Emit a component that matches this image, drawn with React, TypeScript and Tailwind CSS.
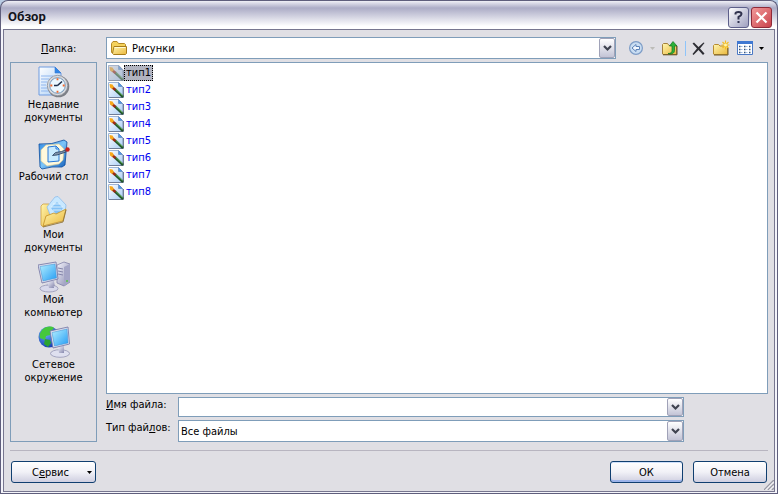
import type { ReactNode } from "react";
import { clsx } from "clsx";

const files = ["тип1", "тип2", "тип3", "тип4", "тип5", "тип6", "тип7", "тип8"];

function Gradients() {
  return (
    <svg width="0" height="0" className="absolute" aria-hidden="true">
      <defs>
        <linearGradient id="paper" x1="0" y1="0" x2="1" y2="1">
          <stop offset="0" stopColor="#ffffff" />
          <stop offset="1" stopColor="#a9cdf5" />
        </linearGradient>
        <linearGradient id="screen" x1="0" y1="0" x2="1" y2="1">
          <stop offset="0" stopColor="#b4f0ff" />
          <stop offset="1" stopColor="#249cf4" />
        </linearGradient>
        <linearGradient id="gold" x1="0" y1="0" x2="1" y2="1">
          <stop offset="0" stopColor="#fff6b0" />
          <stop offset="1" stopColor="#eab73c" />
        </linearGradient>
        <linearGradient id="metal" x1="0" y1="0" x2="1" y2="1">
          <stop offset="0" stopColor="#f4f4fc" />
          <stop offset="1" stopColor="#8688ae" />
        </linearGradient>
        <linearGradient id="desk" x1="0" y1="0" x2="1" y2="1">
          <stop offset="0" stopColor="#2f8ae4" />
          <stop offset="0.5" stopColor="#7cc4f8" />
          <stop offset="1" stopColor="#0a55b4" />
        </linearGradient>
        <radialGradient id="globe" cx="0.35" cy="0.3" r="0.8">
          <stop offset="0" stopColor="#6cb4ff" />
          <stop offset="1" stopColor="#0d2fa8" />
        </radialGradient>
      </defs>
    </svg>
  );
}

function RecentIcon() {
  return (
    <svg width="32" height="32" viewBox="0 0 32 32" aria-hidden="true">
      <path d="M1 1h16l6 6v22H1z" fill="url(#paper)" stroke="#6f9be0" />
      <path d="M17 1v6h6z" fill="#2f86e8" stroke="#3a78d0" strokeWidth="0.6" />
      <path d="M3 10h12M3 13h8M3 16h6M3 19h5M3 22h6M3 25h8" stroke="#8fb6ee" />
      <circle cx="20.5" cy="20.5" r="10.8" fill="#7c7f86" />
      <circle cx="19.5" cy="19.5" r="10.2" fill="#d8dade" stroke="#8b8e96" strokeWidth="0.8" />
      <circle cx="19.5" cy="19.5" r="7.8" fill="#eaf7ff" stroke="#7698ba" />
      <path d="M19.500 19.500l4.500-4M19.500 19.500h-3.500" stroke="#1c2c48" strokeWidth="1.600" />
      <path d="M19.500 12.300v2M19.500 24.700v2M12.300 19.500h2M24.700 19.500h2" stroke="#f0672a" strokeWidth="1.800" />
    </svg>
  );
}

function DesktopIcon() {
  return (
    <svg width="32" height="32" viewBox="0 0 32 32" aria-hidden="true">
      <path d="M1 6q13 1 25-4l3 2-2 23-3 2q-10-1-20 2l-2-2z" fill="url(#desk)" stroke="#0b4c9e" strokeWidth="0.8" />
      <path d="M8 7l13-1 5 5-1 11-4 4-12 2-6-5 0-11z" fill="#fff9dc" stroke="#d8c890" strokeWidth="0.6" />
      <path d="M10 9l8-1 3 3v12l-11 1z" fill="#c9ebff" stroke="#2878d8" />
      <path d="M18 8v3h3" fill="none" stroke="#2878d8" />
      <path d="M14.500 17.500l3-3 6-1 4-1.500.5 2-9 3z" fill="#7f93ac" stroke="#27405f" strokeWidth="0.800" />
      <circle cx="29.5" cy="11.500" r="2.200" fill="#c8231c" />
    </svg>
  );
}

function DocumentsIcon() {
  return (
    <svg width="32" height="32" viewBox="0 0 32 32" aria-hidden="true">
      <path d="M3 10l2-2h6l2 2 1 14-9 7-2-2z" fill="url(#gold)" stroke="#c7962e" strokeWidth="0.700" />
      <path d="M9 11L17 1l3-.5L28 9l-1 8-12 9z" fill="#c8e8ff" stroke="#8ebdeb" strokeWidth="0.800" />
      <path d="M13 12l6-6 6 6-6 7z" fill="#84c2f6" />
      <path d="M15 8h7M13 11h12M15 14h8" stroke="#eef9ff" strokeWidth="0.800" />
      <path d="M5 30L8 20l8-3 2 1 10-5-3 12z" fill="url(#gold)" stroke="#c38f25" strokeWidth="0.800" />
      <path d="M5 31l20-5 3-12" fill="none" stroke="#8f7438" strokeWidth="0.900" />
    </svg>
  );
}

function ComputerIcon() {
  return (
    <svg width="32" height="32" viewBox="0 0 32 32" aria-hidden="true">
      <path d="M19 4l7-3 6 2v18l-6 4-7-3z" fill="url(#metal)" stroke="#7576a0" strokeWidth="0.700" />
      <path d="M26 6l6-3v18l-6 4z" fill="#a4a5c6" />
      <path d="M20 7l5 1M20 10l5 1M20 13l5 1" stroke="#8485aa" />
      <path d="M28 20h2" stroke="#58c642" strokeWidth="1.500" />
      <path d="M9 19l7 1 1 6H8z" fill="url(#metal)" />
      <ellipse cx="11" cy="27.500" rx="9" ry="3.500" fill="#d8d9eb" stroke="#8b8cae" strokeWidth="0.700" />
      <path d="M9 20h6l1 7h-5z" fill="url(#metal)" />
      <path d="M0 4l18-3 2 17-16 4z" fill="#dfe0ee" stroke="#6f72a2" strokeWidth="0.800" />
      <path d="M2 5.500L17 3l1.500 14L5 20z" fill="url(#screen)" stroke="#3d8ed0" strokeWidth="0.500" />
    </svg>
  );
}

function NetworkIcon() {
  return (
    <svg width="32" height="32" viewBox="0 0 32 32" aria-hidden="true">
      <circle cx="11" cy="11" r="10.500" fill="url(#globe)" />
      <path d="M5 3c4-3 9-3 11-1l-3 3-1 4-4 1-1 4-5-2c-1-4 1-7 3-9z" fill="#45c83c" />
      <path d="M7 13l5 1 1 3-3 4-4-3z" fill="#2ba32f" />
      <ellipse cx="22" cy="27.500" rx="9.500" ry="3.800" fill="#dfe0ef" stroke="#8b8cae" strokeWidth="0.700" />
      <path d="M20 20h6v7h-5z" fill="url(#metal)" />
      <path d="M12 5l18-4 1.500 17L15 22z" fill="#dfe0ee" stroke="#6f72a2" strokeWidth="0.800" />
      <path d="M14 6.500L29 3l1 14-13.500 3z" fill="url(#screen)" stroke="#3d8ed0" strokeWidth="0.500" />
    </svg>
  );
}

function PictureIcon({ dim }: { dim?: boolean }) {
  return (
    <svg width="16" height="16" viewBox="0 0 16 16" className="shrink-0" aria-hidden="true">
      <path d="M.5.500h10l4 4v11h-14z" fill="url(#paper)" stroke="#9db4d6" />
      <path d="M10.500.500v4h4z" fill="#4a97e8" stroke="#5b7fb4" strokeWidth="0.600" />
      <path d="M1 15.500h14.500V5" fill="none" stroke="#6f7d98" />
      <path d="M7 7.500l8 7.500" stroke="#23552c" strokeWidth="2.400" />
      <path d="M8 7.500l6.500 6" stroke="#6fc468" strokeWidth="0.900" />
      <path d="M4.500 5.500L7.500 8" stroke="#9c2c16" strokeWidth="2.600" />
      <path d="M1.500 2l3 .5 1.500 2.500-2 2-2-1.500z" fill="#f8a81c" />
      {dim && <path d="M0 0h11l5 5v11H0z" fill="#b2b4c0" fillOpacity="0.5" />}
    </svg>
  );
}

function FolderIcon() {
  return (
    <svg width="16" height="14" viewBox="0 0 16 14" aria-hidden="true">
      <path d="M.5 11.500v-9l1.500-2h4l1.500 2h6l1 1v8z" fill="#f4d25c" stroke="#b58a26" />
      <path d="M3 5.500h12.500v7l-1 1h-12l-1-1z" fill="url(#gold)" stroke="#a77c1c" />
      <path d="M3.500 6.500h11" stroke="#fffbd2" />
    </svg>
  );
}

function Chevron() {
  return (
    <svg width="9" height="7" viewBox="0 0 9 7" aria-hidden="true">
      <path d="M1 1l3.500 3.500L8 1" fill="none" stroke="#3f4350" strokeWidth="2.200" />
    </svg>
  );
}

function DropButton() {
  return (
    <span className="pointer-events-none absolute inset-y-px right-px flex w-4 items-center justify-center rounded-xs border border-[#a0a2b8] bg-linear-to-b from-white to-[#c3c4d6]">
      <Chevron />
    </span>
  );
}

function SmallArrow({ className }: { className?: string }) {
  return (
    <svg width="5" height="3" viewBox="0 0 5 3" className={className} aria-hidden="true">
      <path d="M0 0h5L2.500 3z" fill="currentColor" />
    </svg>
  );
}

const places: { label: string; icon: ReactNode }[] = [
  { label: "Недавние документы", icon: <RecentIcon /> },
  { label: "Рабочий стол", icon: <DesktopIcon /> },
  { label: "Мои документы", icon: <DocumentsIcon /> },
  { label: "Мой компьютер", icon: <ComputerIcon /> },
  { label: "Сетевое окружение", icon: <NetworkIcon /> },
];

function TitleBar() {
  return (
    <header className="flex h-[29px] shrink-0 items-center rounded-t-lg border border-b-0 border-[#5f5e7c] bg-linear-to-b from-[#f0f0f6] from-0% via-[#acacc6] via-25% to-white to-90% pr-[5px] pl-[7px]">
      <h1 className="flex-1 pt-1 font-[Roboto,'Open_Sans',sans-serif] text-[13px] leading-4 font-bold text-[#14141c]">Обзор</h1>
      <div className="flex gap-[2px] pt-1">
        <button aria-label="Справка" className="flex size-[21px] items-center justify-center rounded-[3px] border border-[#5d5f8a] bg-linear-to-br from-white to-[#9fa0bf]">
          <svg width="11" height="14" viewBox="0 0 11 14" aria-hidden="true">
            <path d="M2.500 4.500V3.500Q2.500 2 5.500 2T8.500 4Q8.500 5.500 5.500 7V9.500" fill="none" stroke="#30324e" strokeWidth="2" />
            <path d="M4.500 11h2v2h-2z" fill="#30324e" />
          </svg>
        </button>
        <button aria-label="Закрыть" className="flex size-[21px] items-center justify-center rounded-[3px] border border-[#8f2a38] bg-linear-to-br from-[#f0989a] to-[#c9404c]">
          <svg width="13" height="13" viewBox="0 0 13 13" aria-hidden="true">
            <path d="M1.500 1.500l10 10M11.500 1.500l-10 10" stroke="#fff" strokeWidth="2.200" />
          </svg>
        </button>
      </div>
    </header>
  );
}

function Toolbar() {
  return (
    <div className="flex items-center">
      <button aria-label="Назад" className="ml-[13px]">
        <svg width="14" height="14" viewBox="0 0 14 14" aria-hidden="true">
          <circle cx="7" cy="7" r="6.400" fill="#c9ddf2" stroke="#7d9cc6" strokeWidth="1.200" />
          <path d="M3 7l4-3.500V5.500h3.500v3H7v2z" fill="#f2f8ff" stroke="#5c82b8" />
        </svg>
      </button>
      <SmallArrow className="ml-[7px] text-[#bcbcb8]" />
      <button aria-label="На один уровень вверх" className="ml-[7px]">
        <svg width="16" height="15" viewBox="0 0 16 15" aria-hidden="true">
          <path d="M.5 13V3.500l1-1h4l1.500 2h7.500V13.500H1z" fill="url(#gold)" stroke="#a3813c" />
          <path d="M1 13.800h14V5" fill="none" stroke="#665324" />
          <path d="M6 12.500c3 0 4-1 4-3V5H7.500L11 .5 15 5h-2.500v4.500c0 3-3 4-6.500 3z" fill="#2cb238" stroke="#117222" strokeWidth="0.700" />
        </svg>
      </button>
      <span className="ml-[7px] h-[15px] w-px bg-[#8ec4fa]" />
      <button aria-label="Удалить" className="ml-[6px]">
        <svg width="13" height="13" viewBox="0 0 13 13" aria-hidden="true">
          <path d="M.5 1.500L2 .5 6.500 5 11.500.5l1 .5L8 6.500l4.500 5-1.500 1.500L6.500 8 1.500 13l-1-1L5 6.500z" fill="#2d2d33" />
        </svg>
      </button>
      <button aria-label="Создать папку" className="ml-2">
        <svg width="17" height="16" viewBox="0 0 17 16" aria-hidden="true">
          <path d="M.5 14V5.500l1-1h4l1.500 1.500h7.500V14.500H1z" fill="url(#gold)" stroke="#b78b30" />
          <path d="M1 15h14V8" fill="none" stroke="#705a28" />
          <path d="M12.500.5v9M8.500 5h8M9.500 2l6 6M15.500 2l-6 6" stroke="#f5be22" strokeWidth="1.200" />
          <circle cx="12.500" cy="5" r="1.500" fill="#fff6ae" />
        </svg>
      </button>
      <button aria-label="Представления" className="ml-[7px] flex items-center gap-[6px] text-black">
        <svg width="16" height="14" viewBox="0 0 16 14" aria-hidden="true">
          <path d="M.5.500h15v13H.5z" fill="#fff" stroke="#4a78c4" />
          <path d="M0 0h16v3H0z" fill="#3f78d2" />
          <path d="M2 5.500h1.500M7 5.500h1.500M12 5.500h1.500M2 8.500h1.500M7 8.500h1.500M12 8.500h1.500M2 11.500h1.500M7 11.500h1.500M12 11.500h1.500" stroke="#35537c" strokeWidth="1.500" />
          <path d="M4 5.500h1.500M9 5.500h1.500M4 8.500h1.500M9 8.500h1.500M4 11.500h1.500M9 11.500h1.500" stroke="#9dbbe6" />
        </svg>
        <SmallArrow />
      </button>
    </div>
  );
}

const buttonClass =
  "h-[22px] rounded-[3px] border border-[#103f70] bg-linear-to-b from-white via-[#f1f1f7] to-[#cfcfe0]";

export default function App() {
  return (
    <div className="flex min-h-screen flex-col bg-[#b9cce4] font-['DejaVu_Sans_Condensed','DejaVu_Sans',sans-serif] text-[11px] leading-[13px] text-black">
      <Gradients />
      <TitleBar />
      <div className="flex flex-1 border border-t-0 border-[#5f5e7c] bg-[#f4f4fa] px-[2px] pb-px">
        <main className="flex flex-1 flex-col border border-[#77768f] bg-[#e0dfe4] px-[6px] pt-[7px] pb-2">
          <div className="flex h-[22px] items-center">
            <label htmlFor="folder" className="w-24 pl-[31px]">
              <u>П</u>апка:
            </label>
            <div className="relative h-full w-[510px] min-w-0">
              <select id="folder" className="h-full w-full appearance-none border border-[#7f9db9] bg-white pl-[25px]">
                <option>Рисунки</option>
              </select>
              <span className="pointer-events-none absolute top-1 left-[5px]">
                <FolderIcon />
              </span>
              <DropButton />
            </div>
            <Toolbar />
          </div>

          <div className="mt-[3px] flex flex-1 gap-[9px]">
            <nav className="flex w-[87px] shrink-0 flex-col gap-[7px] border border-[#7f9db9] pt-[3px]">
              {places.map((place) => (
                <button key={place.label} className="flex h-[58px] flex-col items-center justify-center px-1 text-center">
                  {place.icon}
                  <span>{place.label}</span>
                </button>
              ))}
            </nav>

            <div className="flex flex-1 flex-col">
              <ul className="flex-1 border border-[#7f9db9] bg-white p-px">
                {files.map((name, i) => (
                  <li key={name} className="flex h-[17px] items-center">
                    <PictureIcon dim={i === 0} />
                    <button
                      className={clsx(
                        "flex h-4 items-center border px-px",
                        i === 0 ? "border-dotted border-black bg-[#b2b4c0]" : "border-transparent text-[#0000f0]"
                      )}
                    >
                      {name}
                    </button>
                  </li>
                ))}
              </ul>
              <div className="mt-[3px] flex h-5">
                <label htmlFor="name" className="w-[72px] pt-px">
                  <u>И</u>мя файла:
                </label>
                <div className="relative w-[506px]">
                  <input id="name" className="h-full w-full border border-[#7f9db9] bg-white px-[2px]" />
                  <DropButton />
                </div>
              </div>
              <div className="mt-[3px] flex h-[22px]">
                <label htmlFor="type" className="w-[72px] pt-px whitespace-nowrap">
                  Тип фай<u>л</u>ов:
                </label>
                <div className="relative w-[506px]">
                  <select id="type" className="h-full w-full appearance-none border border-[#7f9db9] bg-white px-[2px]">
                    <option>Все файлы</option>
                  </select>
                  <DropButton />
                </div>
              </div>
            </div>
          </div>

          <hr className="mt-2 border-[#b8b5c0]" />
          <div className="mt-[10px] flex gap-[10px] px-px">
            <button className={clsx(buttonClass, "flex w-[85px] items-center justify-end gap-[18px] pr-[3px]")}>
              <span>
                С<u>е</u>рвис
              </span>
              <SmallArrow />
            </button>
            <button className={clsx(buttonClass, "ml-auto w-[73px] shadow-[inset_0_-2px_0_#9cb4ea,inset_0_1px_0_#cfe0fb]")}>ОК</button>
            <button className={clsx(buttonClass, "w-[74px]")}>Отмена</button>
          </div>
        </main>
      </div>
      <svg width="10" height="10" viewBox="0 0 10 10" className="absolute right-1 bottom-1" aria-hidden="true">
        <path d="M0 10L10 0M4 10l6-6M8 10l2-2" stroke="#9a9aa6" strokeWidth="1.500" />
        <path d="M1.500 10L10 1.500M5.500 10l4.500-4.500" stroke="#fff" />
      </svg>
    </div>
  );
}
